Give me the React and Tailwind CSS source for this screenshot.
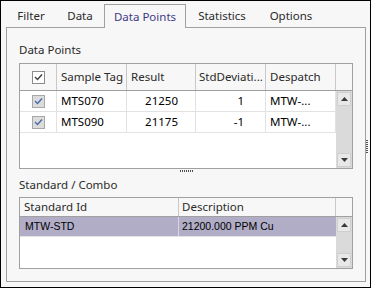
import React from "react";

const tabs = [
  { label: "Filter", w: "w-[50px]" },
  { label: "Data", w: "w-[48px]" },
  { label: "Data Points", w: "w-[82px]", active: true },
  { label: "Statistics", w: "w-[72px]" },
  { label: "Options", w: "w-[66px]" },
];

const points = [
  { tag: "MTS070", result: "21250", dev: "1", despatch: "MTW-..." },
  { tag: "MTS090", result: "21175", dev: "-1", despatch: "MTW-..." },
];

const Arrow = ({ down }) => (
  <svg width="7" height="4" viewBox="0 0 7 4">
    <path d={down ? "M0 0 H7 L3.5 4 Z" : "M0 4 H7 L3.5 0 Z"} fill="#3a3a3a" />
  </svg>
);

const ScrollBar = () => (
  <div className="w-[16px] flex flex-col justify-between bg-[#dadada] p-[1px]">
    <div className="h-[14px] flex items-center justify-center bg-[#e8e8e8] border border-[#cfcfcf]">
      <Arrow />
    </div>
    <div className="h-[14px] flex items-center justify-center bg-[#e8e8e8] border border-[#cfcfcf]">
      <Arrow down />
    </div>
  </div>
);

const CheckBox = ({ header }) =>
  header ? (
    <div className="w-[13px] h-[13px] border border-[#8c8c8c] bg-white flex items-center justify-center">
      <svg width="9" height="8" viewBox="0 0 9 8">
        <path d="M1 4 L3.5 6.5 L8 1.5" fill="none" stroke="#404040" strokeWidth="1.4" />
      </svg>
    </div>
  ) : (
    <div className="w-[13px] h-[13px] border border-[#a8a8a8] bg-[#dcdcdc] flex items-center justify-center">
      <svg width="9" height="8" viewBox="0 0 9 8">
        <path d="M1 4 L3.5 6.5 L8 1.5" fill="none" stroke="#4a6aa8" strokeWidth="1.4" />
      </svg>
    </div>
  );

export default function App() {
  return (
    <div className="relative w-[371px] h-[288px] border border-black bg-[#f7f7f7] text-[11.5px] text-[#1e1e1e] font-['Segoe_UI','Noto_Sans',sans-serif]">
      {/* tab strip */}
      <div className="flex items-end h-[26px] pl-[5px]">
        {tabs.map((t) =>
          t.active ? (
            <div
              key={t.label}
              className={`${t.w} h-[24px] -mb-px relative z-10 flex items-center justify-center border-t border-l border-r border-[#a0a0a0] bg-[#f7f7f7] text-[#3e3a86]`}
            >
              {t.label}
            </div>
          ) : (
            <div key={t.label} className={`${t.w} h-[23px] flex items-center justify-center text-[#2a2a2a]`}>
              {t.label}
            </div>
          )
        )}
      </div>

      {/* panel */}
      <div className="ml-[5px] w-[360px] h-[255px] border border-[#a0a0a0] px-[12px]">
        <div className="h-[35px] pt-[14px] leading-[16px] text-[#2a2a2a]">Data Points</div>

        {/* data points grid */}
        <div className="h-[106px] border border-[#a0a0a0] bg-white flex flex-col">
          <div className="h-[27px] flex border-b border-[#a0a0a0] bg-[#f7f7f7] text-[#2a2a2a]">
            <div className="w-[37px] border-r border-[#c8c8c8] flex items-center justify-center">
              <CheckBox header />
            </div>
            <div className="w-[70px] border-r border-[#c8c8c8] flex items-center pl-[4px] whitespace-nowrap">Sample Tag</div>
            <div className="w-[69px] border-r border-[#c8c8c8] flex items-center pl-[4px]">Result</div>
            <div className="w-[70px] border-r border-[#c8c8c8] flex items-center pl-[3px] whitespace-nowrap">StdDeviati...</div>
            <div className="w-[70px] border-r border-[#c8c8c8] flex items-center pl-[4px]">Despatch</div>
            <div className="flex-1" />
          </div>
          <div className="flex-1 flex">
            <div className="w-[316px] flex flex-col">
              {points.map((p) => (
                <div key={p.tag} className="h-[21px] flex border-b border-[#e2e2e2] text-black">
                  <div className="w-[37px] border-r border-[#e2e2e2] flex items-center justify-center">
                    <CheckBox />
                  </div>
                  <div className="w-[70px] border-r border-[#e2e2e2] flex items-center pl-[4px]">{p.tag}</div>
                  <div className="w-[69px] border-r border-[#e2e2e2] flex items-center justify-end pr-[17px]">{p.result}</div>
                  <div className="w-[70px] border-r border-[#e2e2e2] flex items-center justify-end pr-[21px]">{p.dev}</div>
                  <div className="w-[70px] border-r border-[#e2e2e2] flex items-center pl-[4px]">{p.despatch}</div>
                </div>
              ))}
            </div>
            <ScrollBar />
          </div>
        </div>

        {/* splitter + label */}
        <div className="h-[28px] flex flex-col">
          <div className="mt-[1px] h-[2px] flex justify-center gap-[1px]">
            {[0, 1, 2, 3, 4, 5, 6].map((i) => (
              <div key={i} className="w-[1px] h-[2px] bg-[#505050]" />
            ))}
          </div>
          <div className="mt-[5px] leading-[16px] text-[#2a2a2a]">Standard / Combo</div>
        </div>

        {/* standard grid */}
        <div className="h-[72px] border border-[#a0a0a0] bg-white flex flex-col">
          <div className="h-[19px] flex border-b border-[#a0a0a0] bg-[#f7f7f7] text-[#2a2a2a]">
            <div className="w-[159px] border-r border-[#c8c8c8] flex items-center pl-[4px]">Standard Id</div>
            <div className="w-[157px] border-r border-[#c8c8c8] flex items-center pl-[3px]">Description</div>
            <div className="flex-1" />
          </div>
          <div className="flex-1 flex">
            <div className="w-[316px] flex flex-col">
              <div className="h-[20px] flex border-b border-[#e2e2e2] bg-[#b1adc7] text-black text-[10.5px] font-['Liberation_Sans',Arial,sans-serif]">
                <div className="w-[159px] border-r border-[#d8d6e2] flex items-center pl-[5px]">MTW-STD</div>
                <div className="w-[157px] flex items-center pl-[3px]">21200.000 PPM Cu</div>
              </div>
            </div>
            <ScrollBar />
          </div>
        </div>
      </div>

      {/* side splitter grip */}
      <div className="absolute left-[365px] top-[139px] w-[2px] flex flex-col gap-[1px]">
        {[0, 1, 2, 3, 4, 5, 6].map((i) => (
          <div key={i} className="w-[2px] h-[1px] bg-[#505050]" />
        ))}
      </div>
    </div>
  );
}
